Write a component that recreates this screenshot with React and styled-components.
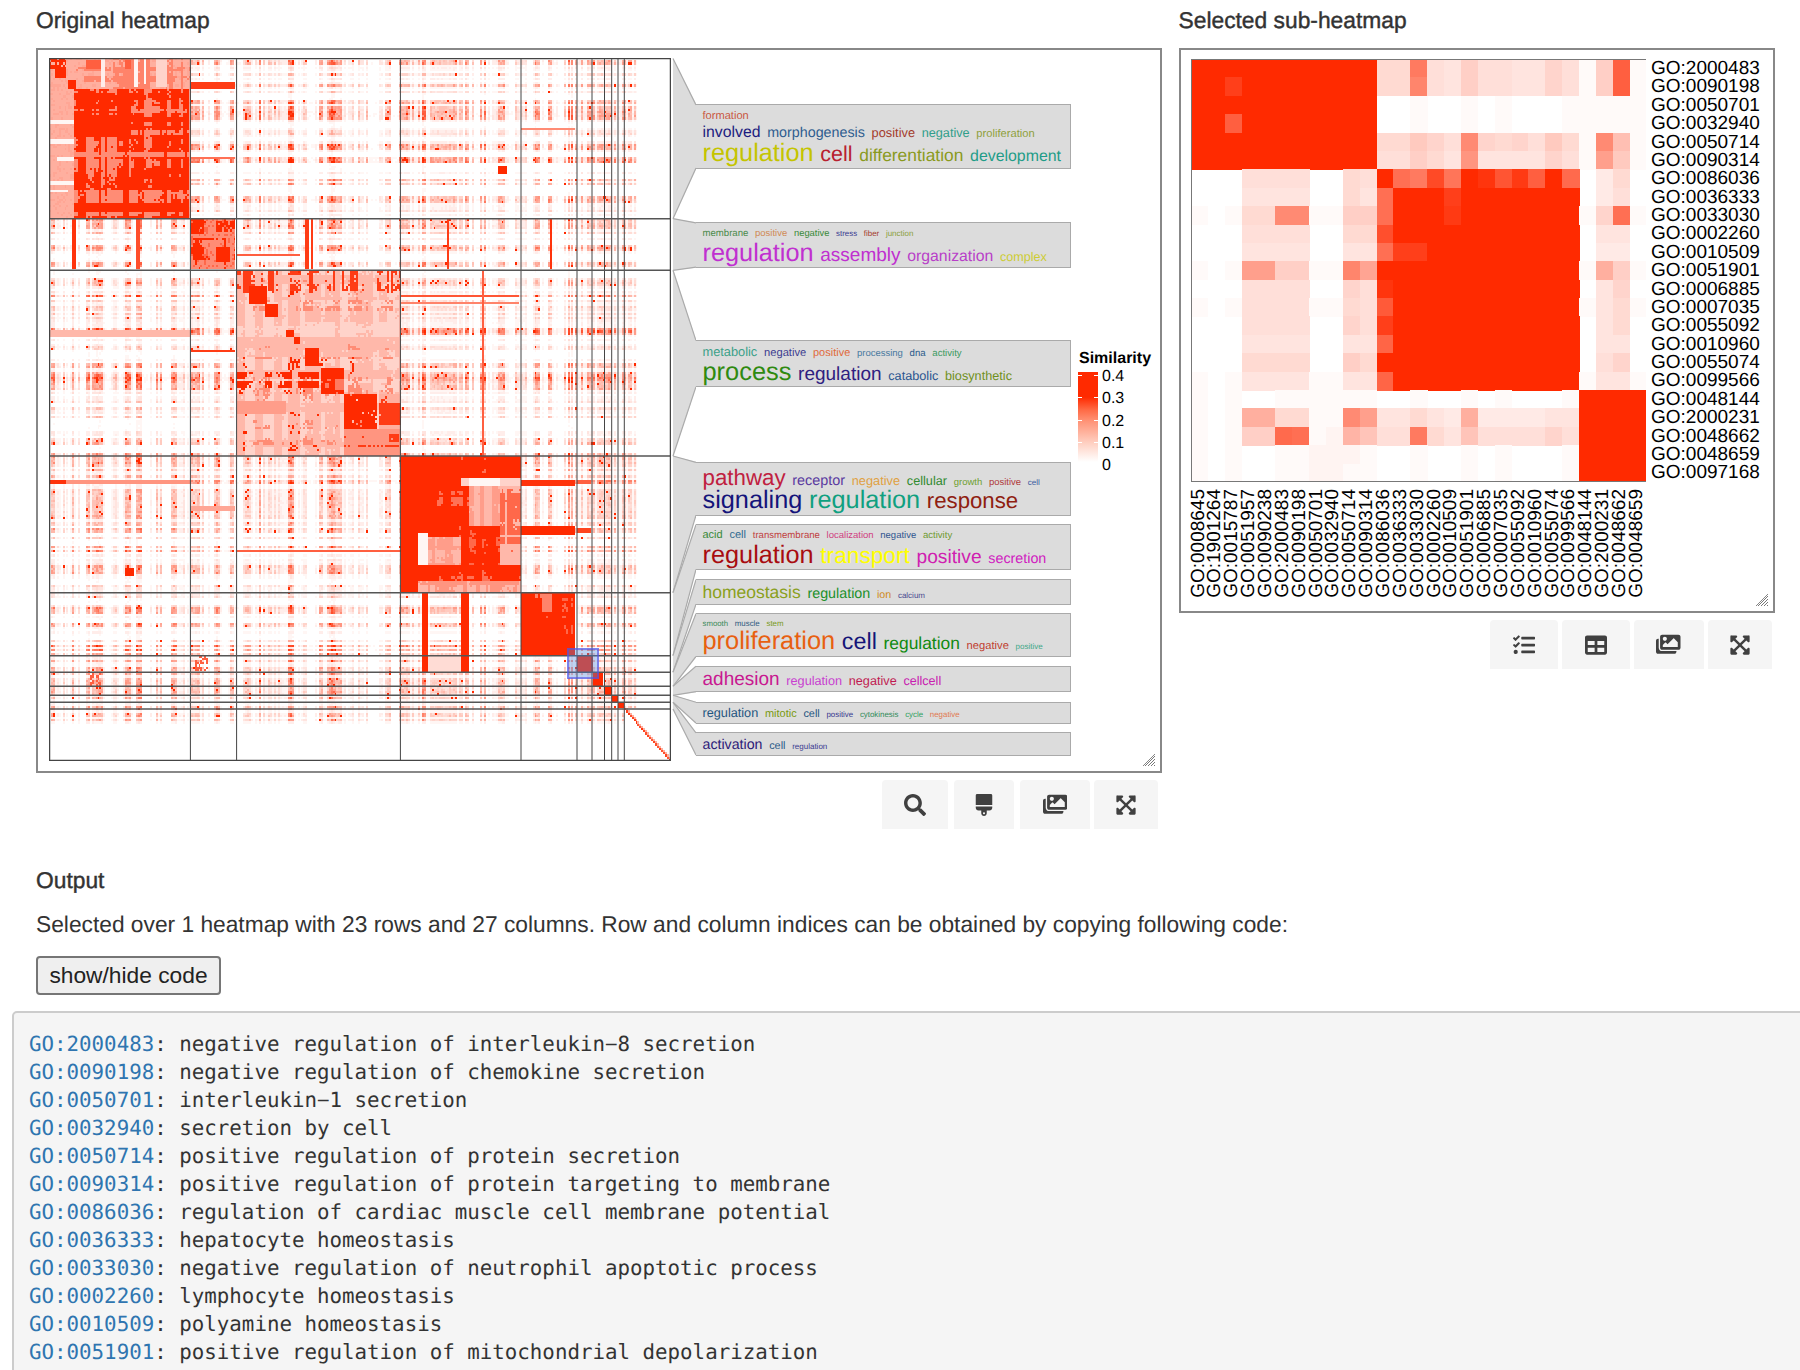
import React from "react";
import styled, { createGlobalStyle } from "styled-components";
import { FaSearch, FaBrush, FaImages, FaExpandArrowsAlt, FaTasks, FaTable } from "react-icons/fa";

const GlobalStyle = createGlobalStyle`
  html, body {
    margin: 0;
    padding: 0;
    height: 1370px;
    overflow: hidden;
    background: #fff;
    font-family: "Liberation Sans", Arial, sans-serif;
    color: #333;
    text-rendering: geometricPrecision;
  }
`;

const Page = styled.div`
  padding-left: 36px;
  width: 1800px;
  box-sizing: border-box;
`;

const TopRow = styled.div`
  display: flex;
  gap: 16.5px;
  align-items: flex-start;
`;

const Column = styled.section`
  width: ${(p) => p.$width}px;
`;

const Heading = styled.h4`
  margin: 0;
  height: 48px;
  font-size: 22.8px;
  line-height: 41px;
  font-weight: 400;
  -webkit-text-stroke: 0.4px #333;
  color: #333;
`;

const Panel = styled.div`
  position: relative;
  box-sizing: border-box;
  border: 2px solid #888;
  height: ${(p) => p.$height}px;
  padding: ${(p) => p.$pad};
  display: flex;
  align-items: flex-start;
`;

const ResizeGrip = styled.svg`
  position: absolute;
  right: 5px;
  bottom: 5px;
  width: 12px;
  height: 12px;
`;

const Toolbar = styled.div`
  display: flex;
  justify-content: flex-end;
  gap: ${(p) => p.$gap || 4}px;
  margin-top: 7px;
  padding-right: ${(p) => p.$right}px;
`;

const ToolButton = styled.button`
  width: ${(p) => p.$w}px;
  height: 49px;
  border: 0;
  padding: 0;
  margin-left: ${(p) => p.$ml || 0}px;
  background: #f5f5f5;
  border-radius: 4px 4px 0 0;
  color: #404040;
  font-size: ${(p) => p.$icon || 22}px;
  display: flex;
  align-items: center;
  justify-content: center;
`;

const HeatmapFrame = styled.div`
  position: relative;
  width: 622px;
  height: 703px;
  flex: none;
`;

const Selection = styled.div`
  position: absolute;
  left: 517.6px;
  top: 590.3px;
  width: 32.4px;
  height: 31px;
  box-sizing: border-box;
  border: 2px solid rgba(80, 80, 235, 0.6);
  background: rgba(70, 130, 220, 0.35);
`;

const LinkGutter = styled.svg`
  width: 25px;
  height: 703px;
  flex: none;
`;

const Annotations = styled.div`
  width: 375px;
  flex: none;
  display: flex;
  flex-direction: column;
`;

const CloudBox = styled.div`
  box-sizing: border-box;
  height: ${(p) => p.$height}px;
  margin-top: ${(p) => p.$top}px;
  background: #dcdcdc;
  border: 1.5px solid #aaa;
  border-left: 0;
  padding-left: 6.5px;
  overflow: hidden;
`;

const WordRow = styled.div`
  display: flex;
  align-items: baseline;
  gap: 6.7px;
  line-height: 1;
  white-space: nowrap;
  margin-top: ${(p) => p.$top}px;
`;

const Word = styled.span`
  font-size: ${(p) => p.$size}px;
  color: ${(p) => p.$color};
`;

const Legend = styled.div`
  margin-left: 7px;
  margin-top: 291px;
  width: 80px;
`;

const LegendTitle = styled.div`
  height: 17px;
  font-size: 16px;
  line-height: 20px;
  font-weight: 700;
  color: #000;
  padding-left: 1px;
`;

const LegendBody = styled.div`
  display: flex;
  gap: 4px;
`;

const LegendBar = styled.div`
  position: relative;
  width: 20px;
  height: 90px;
  margin-top: 6px;
  background: linear-gradient(#ff2a00 0%, #ff2a00 28%, #ff6a45 42%, #ff9478 55%, #ffd0c2 79%, #fff 100%);
`;

const LegendTick = styled.i`
  position: absolute;
  top: ${(p) => p.$top}px;
  height: 1px;
  width: 4px;
  background: #fff;
  ${(p) => p.$side}: 0;
`;

const LegendLabels = styled.div`
  font-size: 16px;
  line-height: 22.25px;
  color: #000;
`;

const SubPlot = styled.div`
  display: grid;
  grid-template-columns: 455.5px auto;
  column-gap: 5px;
`;

const RowLabels = styled.div`
  display: grid;
  grid-auto-rows: 18.39px;
  margin-top: 1px;
  font-size: 19px;
  line-height: 18.39px;
  color: #000;
`;

const ColLabels = styled.div`
  display: grid;
  grid-template-columns: repeat(27, 16.87px);
  margin-top: 6px;
  height: 108px;
`;

const ColLabel = styled.div`
  writing-mode: vertical-rl;
  transform: rotate(180deg);
  font-size: 19px;
  line-height: 16.87px;
  color: #000;
  white-space: nowrap;
`;

const OutputTitle = styled.h5`
  margin: 39px 0 0;
  font-size: 22.8px;
  line-height: 24px;
  font-weight: 400;
  -webkit-text-stroke: 0.4px #333;
  color: #333;
`;

const Paragraph = styled.p`
  margin: 20px 0 0;
  font-size: 22.75px;
  line-height: 24px;
  color: #333;
`;

const ToggleButton = styled.button`
  display: block;
  margin: 20px 0 0;
  width: 185px;
  height: 39px;
  box-sizing: border-box;
  border: 2px solid #767676;
  border-radius: 4px;
  background: #efefef;
  font-family: "Liberation Sans", Arial, sans-serif;
  font-size: 22.75px;
  color: #222;
  padding: 0;
`;

const CodeBlock = styled.pre`
  margin: 16px 0 0 -24px;
  width: 1800px;
  height: 400px;
  box-sizing: border-box;
  padding: 17px 15px;
  background: #f5f5f5;
  border: 2px solid #ccc;
  border-radius: 5px;
  font-family: "DejaVu Sans Mono", monospace;
  font-size: 20.8px;
  line-height: 28px;
  color: #333;
`;

const GoId = styled.span`
  color: #2f75b0;
`;

// ---- main heatmap, a fake but same looking similarity matrix ----
const N = 320;
const CX = 1477 / N; // reading coordinates -> matrix index
const CY = 2108 / N;

function mulberry(seed) {
  return () => {
    seed |= 0;
    seed = (seed + 0x6d2b79f5) | 0;
    let t = Math.imul(seed ^ (seed >>> 15), 1 | seed);
    t = (t + Math.imul(t ^ (t >>> 7), 61 | t)) ^ t;
    return ((t ^ (t >>> 14)) >>> 0) / 4294967296;
  };
}

const CLUSTERS = [0, 0.2277, 0.302, 0.566, 0.76, 0.85, 0.874, 0.8945, 0.906, 0.916, 0.926, 1].map((f) => Math.round(f * N));

function buildMatrix() {
  const r = mulberry(77);
  const last = CLUSTERS[10];
  const cluster = (i) => CLUSTERS.findIndex((c, k) => i >= c && i < CLUSTERS[k + 1]);
  const p = new Array(N).fill(0).map((_, i) => {
    if (i >= N * 0.95) return 0;
    if (i >= last) return 0.2 * r();
    const u = r();
    return u < 0.55 ? 0.02 : u < 0.85 ? 0.08 + 0.08 * r() : 0.22 + 0.13 * r();
  });
  const bands = [
    [50, 60, 0.6], [100, 108, 0.7], [135, 170, 0.55], [228, 238, 0.7], [255, 265, 0.75], [300, 310, 0.45],
    [340, 350, 0.55], [385, 410, 0.45], [440, 455, 0.55], [470, 480, 0.5], [515, 525, 0.45], [540, 548, 0.7],
    [560, 590, 0.32], [615, 628, 0.85], [690, 745, 0.5], [712, 720, 0.8], [845, 855, 0.4], [880, 925, 0.45],
    [928, 936, 0.8], [945, 1025, 0.36], [1035, 1040, 0.5], [1073, 1079, 0.6], [1115, 1135, 0.5], [1203, 1209, 0.6],
    [1233, 1241, 0.6], [1280, 1290, 0.75], [1300, 1335, 0.42], [1340, 1440, 0.42],
  ];
  bands.forEach(([a, b, v]) => {
    for (let i = Math.floor((a - 45) / CX); i <= (b - 45) / CX; i++) {
      p[i] = r() < 0.3 ? 0.08 : v * (0.8 + 0.4 * r());
    }
  });

  const m = [];
  for (let y = 0; y < N; y++) m.push(new Float32Array(N));
  for (let y = 0; y < N; y++) {
    for (let x = 0; x < y; x++) {
      let v = 0;
      if (cluster(x) !== cluster(y)) {
        v = 0.62 * p[x] * p[y] * (0.6 + 0.6 * r());
        if (r() < 0.06 && p[x] * p[y] > 0.12) v = 0.4;
      }
      m[y][x] = v;
      m[x][y] = v;
    }
  }

  const span = (x0, y0, x1, y1) => [
    Math.max(0, Math.round((x0 - 45) / CX)),
    Math.max(0, Math.round((y0 - 55) / CY)),
    Math.min(N, Math.round((x1 - 45) / CX)),
    Math.min(N, Math.round((y1 - 55) / CY)),
  ];

  const fill = (x0, y0, x1, y1, v, density = 1, alt = null) => {
    const [ax, ay, bx, by] = span(x0, y0, x1, y1);
    for (let y = ay; y < by; y++) {
      for (let x = ax; x < bx; x++) {
        if (r() < density) m[y][x] = v;
        else if (alt !== null) m[y][x] = alt;
      }
    }
  };

  // rows and columns that go on and off together, so the noise looks like a plaid
  const runs = (len) => {
    const out = [];
    while (out.length < len) {
      const a = r();
      const run = 1 + Math.floor(r() * 4);
      for (let i = 0; i < run; i++) out.push(a);
    }
    return out;
  };
  const plaid = (x0, y0, x1, y1, hi, lo, t) => {
    const [ax, ay, bx, by] = span(x0, y0, x1, y1);
    const cols = runs(bx - ax);
    const rows = runs(by - ay);
    for (let y = ay; y < by; y++) {
      for (let x = ax; x < bx; x++) {
        if (cols[x - ax] + rows[y - ay] + 0.35 * r() > t) m[y][x] = hi;
        else if (lo !== null) m[y][x] = lo;
      }
    }
  };

  // first cluster
  fill(45, 55, 380, 535, 0.15, 0.8, 0.17);
  plaid(105, 145, 378, 535, 0.4, 0.22, 1.1);
  plaid(105, 150, 240, 290, 0.4, null, 0.8);
  plaid(105, 58, 380, 145, 0.24, null, 1.2);
  fill(170, 58, 178, 140, 0.03);
  fill(246, 58, 256, 140, 0.02);
  fill(270, 58, 276, 135, 0.02);
  fill(300, 58, 326, 140, 0.08);
  fill(135, 60, 170, 90, 0.3);
  fill(225, 60, 238, 90, 0.3);
  fill(47, 58, 85, 90, 0.4, 0.7);
  fill(60, 90, 85, 115, 0.4);
  fill(92, 120, 110, 150, 0.4);
  fill(47, 240, 105, 250, 0.01);
  fill(47, 300, 105, 315, 0.01);
  fill(65, 352, 105, 362, 0.01);
  fill(47, 425, 105, 440, 0.01);
  fill(47, 450, 90, 458, 0.02);
  fill(272, 388, 300, 420, 0.4);
  fill(335, 478, 360, 510, 0.4);
  fill(248, 355, 275, 385, 0.4);
  fill(335, 360, 360, 385, 0.4);
  // second cluster
  fill(380, 536, 490, 690, 0.22, 0.8, 0.28);
  plaid(380, 536, 490, 690, 0.4, null, 1.3);
  fill(380, 536, 415, 580, 0.4, 0.9);
  fill(440, 620, 475, 665, 0.4);
  fill(440, 540, 490, 575, 0.4, 0.7);
  fill(380, 620, 412, 642, 0.4);
  // third cluster
  plaid(491, 692, 880, 1247, 0.14, 0.09, 1.1);
  plaid(491, 692, 880, 1247, 0.22, null, 1.8);
  plaid(491, 692, 880, 1247, 0.4, null, 2.0);
  plaid(491, 692, 880, 760, 0.36, null, 1.6);
  plaid(491, 1000, 745, 1060, 0.4, null, 1.55);
  fill(520, 740, 560, 795, 0.4);
  fill(558, 795, 590, 830, 0.4);
  fill(610, 870, 625, 890, 0.4);
  fill(625, 890, 640, 910, 0.4);
  fill(655, 925, 685, 975, 0.4);
  plaid(690, 985, 745, 1060, 0.4, 0.25, 1.0);
  fill(745, 1060, 825, 1170, 0.4, 0.95);
  plaid(830, 1060, 880, 1200, 0.36, 0.15, 1.3);
  plaid(745, 1170, 880, 1247, 0.36, 0.2, 1.3);
  fill(491, 1080, 610, 1120, 0.18);
  // fourth cluster
  plaid(880, 1250, 1165, 1655, 0.4, 0.26, 0.75);
  fill(1025, 1310, 1165, 1340, 0.08);
  fill(1040, 1310, 1115, 1340, 0.01);
  plaid(1040, 1340, 1115, 1455, 0.18, 0.13, 1.1);
  plaid(1115, 1340, 1165, 1580, 0.28, 0.14, 1.2);
  plaid(1023, 1455, 1115, 1580, 0.4, 0.28, 0.9);
  fill(920, 1480, 945, 1580, 0.01);
  plaid(945, 1490, 1023, 1580, 0.18, 0.13, 1.1);
  fill(880, 1480, 920, 1580, 0.4);
  fill(880, 1250, 920, 1300, 0.4);
  plaid(920, 1620, 1165, 1655, 0.2, 0.13, 1.1);
  // fifth cluster
  plaid(1167, 1658, 1298, 1847, 0.4, 0.28, 0.6);
  plaid(1200, 1665, 1240, 1715, 0.24, null, 0.9);
  // small ones on the diagonal
  fill(1300, 1847, 1336, 1897, 0.38);
  fill(1336, 1897, 1362, 1939, 0.4);
  fill(1365, 1939, 1382, 1966, 0.4);
  fill(1382, 1966, 1397, 1987, 0.4);
  fill(1397, 1987, 1412, 2007, 0.4);
  // stripes
  fill(1167, 1320, 1298, 1342, 0.38);
  fill(1300, 1320, 1335, 1330, 0.3);
  fill(1167, 1455, 1298, 1482, 0.4);
  fill(1300, 1468, 1335, 1480, 0.35);
  fill(47, 1322, 380, 1330, 0.2);
  fill(47, 1320, 85, 1330, 0.38);
  fill(491, 1528, 880, 1536, 0.3);
  fill(380, 1402, 490, 1412, 0.16);
  fill(930, 1658, 945, 1897, 0.4);
  fill(1025, 1658, 1040, 1897, 0.4);
  fill(945, 1847, 1025, 1897, 0.07);
  fill(1112, 375, 1135, 405, 0.4);
  fill(990, 536, 995, 690, 0.36);
  fill(655, 536, 662, 690, 0.36);
  fill(668, 536, 674, 690, 0.36);
  fill(100, 536, 108, 690, 0.38);
  fill(255, 536, 262, 690, 0.33);
  fill(1235, 536, 1242, 690, 0.38);
  fill(491, 642, 640, 650, 0.3);
  fill(380, 130, 490, 148, 0.36);
  fill(380, 350, 490, 358, 0.26);
  fill(380, 928, 490, 938, 0.36);
  fill(47, 872, 380, 890, 0.14);
  fill(880, 765, 1160, 772, 0.32);
  fill(880, 785, 1160, 792, 0.24);
  fill(1075, 692, 1079, 1250, 0.3);
  fill(1167, 85, 1300, 90, 0.32);
  fill(1167, 268, 1298, 274, 0.22);
  fill(225, 1585, 248, 1612, 0.4);
  fill(140, 1900, 170, 1938, 0.3, 0.5);
  fill(390, 1850, 425, 1895, 0.3, 0.5);
  for (let i = last; i < N; i++) {
    m[i][i] = 0.3 + 0.1 * r();
    if (i + 1 < N) m[i][i + 1] = 0.15;
  }
  return m;
}

const LEVELS = 24;

function levelColor(l) {
  const t = l / LEVELS;
  return `rgb(255,${Math.round(255 - 213 * t)},${Math.round(255 - 255 * t)})`;
}

function buildPaths() {
  const m = buildMatrix();
  const paths = new Array(LEVELS + 1).fill("");
  const levelAt = (y, x) => Math.min(LEVELS, Math.round((m[y][x] / 0.4) * LEVELS));
  for (let y = 0; y < N; y++) {
    let x = 0;
    while (x < N) {
      const l = levelAt(y, x);
      let e = x + 1;
      while (e < N && levelAt(y, e) === l) e++;
      if (l > 0) paths[l] += `M${x} ${y}h${e - x}v1h${x - e}z`;
      x = e;
    }
  }
  return paths;
}

const HEAT_PATHS = buildPaths();

const COL_BREAKS = [190.4, 236.6, 400.4, 521, 577, 592, 604.5, 611.7, 618, 624.3];
const ROW_BREAKS = [218.7, 270.3, 456, 592.7, 655.7, 672.3, 686.3, 695.3, 702.3, 709];

function MainHeatmap() {
  return (
    <svg width="622" height="703" style={{ display: "block" }}>
      <g transform={`scale(${621.5 / N} ${703 / N})`} shapeRendering="crispEdges">
        {HEAT_PATHS.map((d, l) => (d ? <path key={l} d={d} fill={levelColor(l)} /> : null))}
      </g>
      {COL_BREAKS.map((x) => (
        <line key={x} x1={x - 49} x2={x - 49} y1="0" y2="703" stroke="#444" strokeWidth="1" />
      ))}
      {ROW_BREAKS.map((y) => (
        <line key={y} y1={y - 58} y2={y - 58} x1="0" x2="621" stroke="#555" strokeWidth="1.5" />
      ))}
      <rect x="0.5" y="0.5" width="621" height="702" fill="none" stroke="#444" strokeWidth="1.5" />
    </svg>
  );
}

// top, bottom of each word cloud box, and where it starts on the heatmap side
const CLOUDS = [
  {
    top: 104.3, bottom: 168.7, from: [58.5, 218.7],
    rows: [
      { base: 121, words: [["formation", 11.1, "#c9573f"]] },
      { base: 139, words: [["involved", 15.8, "#1c1c80"], ["morphogenesis", 14.3, "#2f5d8f"], ["positive", 12.8, "#a33a2a"], ["negative", 12.7, "#2f9e8a"], ["proliferation", 11.2, "#8fa03c"]] },
      { base: 162.5, words: [["regulation", 25.3, "#c4c400"], ["cell", 21.5, "#b8202f"], ["differentiation", 17.4, "#8a9a1e"], ["development", 15.9, "#1f9c88"]] },
    ],
  },
  {
    top: 222.3, bottom: 267.7, from: [218.7, 270.3],
    rows: [
      { base: 237, words: [["membrane", 9.6, "#4a8a4a"], ["positive", 9.5, "#d08a55"], ["negative", 9.4, "#3a8a3a"], ["stress", 7.9, "#3a3a90"], ["fiber", 7.9, "#a33a2a"], ["junction", 8, "#8aa040"]] },
      { base: 261.5, words: [["regulation", 25.3, "#c030d0"], ["assembly", 19, "#c030d0"], ["organization", 15.8, "#b840c8"], ["complex", 12.6, "#cccc33"]] },
    ],
  },
  {
    top: 340, bottom: 387.3, from: [270.3, 456],
    rows: [
      { base: 357, words: [["metabolic", 12.8, "#3aa088"], ["negative", 11.2, "#3c3c90"], ["positive", 11, "#e0693a"], ["processing", 9.5, "#4a7aa0"], ["dna", 9.6, "#2a5a8a"], ["activity", 9.6, "#3a9a60"]] },
      { base: 381.5, words: [["process", 25.4, "#2f8a10"], ["regulation", 19, "#2e2080"], ["catabolic", 12.7, "#2a5590"], ["biosynthetic", 12.7, "#6f9020"]] },
    ],
  },
  {
    top: 461.7, bottom: 515.7, from: [456, 592.7],
    rows: [
      { base: 486, words: [["pathway", 22.3, "#c02040"], ["receptor", 14.4, "#5a3aa0"], ["negative", 12.8, "#e0a040"], ["cellular", 12.7, "#2f8a2f"], ["growth", 9.5, "#6fa030"], ["positive", 9.5, "#b03a3a"], ["cell", 8, "#3a5aa0"]] },
      { base: 510, words: [["signaling", 25.3, "#14147a"], ["regulation", 25.3, "#10a080"], ["response", 22.2, "#8f2010"]] },
    ],
  },
  {
    top: 524, bottom: 570, from: [592.7, 655.7],
    rows: [
      { base: 540, words: [["acid", 11, "#3a8a3a"], ["cell", 11.1, "#2f6a90"], ["transmembrane", 9.6, "#c04040"], ["localization", 9.5, "#d04080"], ["negative", 9.5, "#2f5590"], ["activity", 9.6, "#6f9a30"]] },
      { base: 564.8, words: [["regulation", 25.3, "#a80c10"], ["transport", 22.7, "#ffff00"], ["positive", 19.2, "#d020b0"], ["secretion", 14.3, "#d020c0"]] },
    ],
  },
  {
    top: 579, bottom: 604.7, from: [655.7, 672.3],
    rows: [{ base: 599.5, words: [["homeostasis", 17.5, "#8aa020"], ["regulation", 14.3, "#20902a"], ["ion", 10.7, "#d08a20"], ["calcium", 8, "#4a4a90"]] }],
  },
  {
    top: 613, bottom: 657, from: [672.3, 686.3],
    rows: [
      { base: 627, words: [["smooth", 7.8, "#3a8a5a"], ["muscle", 7.9, "#2f5a80"], ["stem", 7.9, "#7a9a20"]] },
      { base: 651.5, words: [["proliferation", 25.4, "#e86010"], ["cell", 23.3, "#141478"], ["regulation", 17.4, "#108a10"], ["negative", 11.2, "#c04030"], ["positive", 8, "#40a888"]] },
    ],
  },
  {
    top: 665.7, bottom: 692.3, from: [686.3, 695.3],
    rows: [{ base: 686.8, words: [["adhesion", 19, "#c81890"], ["regulation", 12.7, "#c840d0"], ["negative", 12.7, "#c01a50"], ["cellcell", 12.6, "#c820b0"]] }],
  },
  {
    top: 701.7, bottom: 723.7, from: [695.3, 702.3],
    rows: [{ base: 718, words: [["regulation", 12.7, "#1f5580"], ["mitotic", 11, "#7a9a10"], ["cell", 10.9, "#1f5580"], ["positive", 7.9, "#3a3a90"], ["cytokinesis", 7.9, "#2f8a5a"], ["cycle", 7.9, "#30a060"], ["negative", 7.9, "#e07a50"]] }],
  },
  {
    top: 732.3, bottom: 755.7, from: [702.3, 709],
    rows: [{ base: 750.8, words: [["activation", 14.2, "#2c1a78"], ["cell", 10.9, "#2a5a88"], ["regulation", 8, "#3a3a90"]] }],
  },
];

function CloudLinks() {
  return (
    <LinkGutter viewBox="0 0 25 703">
      {CLOUDS.map((c) => {
        const [a, b] = c.from;
        const points = `2,${a - 58} 25,${c.top - 58} 25,${c.bottom - 58} 2,${b - 58}`;
        return (
          <g key={c.top}>
            <polygon points={points} fill="#dcdcdc" />
            <polyline points={`2,${a - 58} 25,${c.top - 57.4}`} fill="none" stroke="#aaa" strokeWidth="1.2" />
            <polyline points={`2,${b - 58} 25,${c.bottom - 58.6}`} fill="none" stroke="#aaa" strokeWidth="1.2" />
          </g>
        );
      })}
    </LinkGutter>
  );
}

function Cloud({ cloud, prevBottom }) {
  let cursor = cloud.top + 1.5;
  return (
    <CloudBox $top={cloud.top - prevBottom} $height={cloud.bottom - cloud.top}>
      {cloud.rows.map((row) => {
        const size = Math.max(...row.words.map((w) => w[1]));
        const rowTop = row.base - 0.8465 * size;
        const margin = rowTop - cursor;
        cursor = rowTop + size;
        return (
          <WordRow key={row.base} $top={margin}>
            {row.words.map(([text, wordSize, color]) => (
              <Word key={text} $size={wordSize} $color={color}>
                {text}
              </Word>
            ))}
          </WordRow>
        );
      })}
    </CloudBox>
  );
}

const ROW_IDS = ["2000483", "0090198", "0050701", "0032940", "0050714", "0090314", "0086036", "0036333", "0033030", "0002260", "0010509", "0051901", "0006885", "0007035", "0055092", "0010960", "0055074", "0099566", "0048144", "2000231", "0048662", "0048659", "0097168"];
const COL_IDS = ["0008645", "1901264", "0015787", "0051957", "0090238", "2000483", "0090198", "0050701", "0032940", "0050714", "0090314", "0086036", "0036333", "0033030", "0002260", "0010509", "0051901", "0006885", "0007035", "0055092", "0010960", "0055074", "0099566", "0048144", "2000231", "0048662", "0048659"];

const F = 40;
const SUB = [
  [F, F, F, F, F, F, F, F, F, F, F, 7, 7, 25, 6, 5, 9, 6, 6, 5, 5, 8, 6, 1, 9, 30, 1],
  [F, F, 36, F, F, F, F, F, F, F, F, 7, 7, 23, 6, 5, 9, 6, 6, 5, 5, 8, 6, 1, 9, 30, 1],
  [F, F, F, F, F, F, F, F, F, F, F, 0, 0, 1, 0, 0, 1, 0, 1, 0, 0, 0, 1, 1, 1, 1, 1],
  [F, F, 30, F, F, F, F, F, F, F, F, 0, 0, 1, 0, 0, 1, 0, 1, 0, 0, 0, 1, 1, 1, 1, 1],
  [F, F, F, F, F, F, F, F, F, F, F, 7, 7, 10, 8, 6, 22, 8, 7, 8, 6, 10, 7, 1, 22, 12, 1],
  [F, F, F, F, F, F, F, F, F, F, F, 6, 6, 9, 7, 5, 20, 5, 5, 5, 5, 8, 6, 1, 18, 10, 1],
  [0, 0, 0, 6, 6, 6, 6, 0, 0, 7, 6, F, 27, 25, 34, 26, F, 38, 32, 37, 30, F, 28, 0, 4, 7, 0],
  [0, 0, 0, 5, 5, 5, 5, 0, 0, 7, 5, 27, F, F, F, 36, F, F, F, F, F, F, F, 0, 4, 6, 0],
  [1, 0, 1, 7, 7, 22, 22, 1, 1, 9, 9, 27, F, F, F, 37, F, F, F, F, F, F, F, 1, 8, 27, 1],
  [0, 0, 0, 6, 6, 6, 6, 0, 0, 7, 7, 33, F, F, F, F, F, F, F, F, F, F, F, 0, 5, 5, 0],
  [0, 0, 0, 5, 5, 5, 5, 0, 0, 5, 5, 27, 36, 36, F, F, F, F, F, F, F, F, F, 0, 4, 4, 0],
  [1, 0, 1, 18, 18, 9, 9, 1, 1, 23, 17, F, F, F, F, F, F, F, F, F, F, F, F, 1, 15, 9, 1],
  [0, 0, 0, 6, 6, 6, 6, 0, 0, 8, 6, 38, F, F, F, F, F, F, F, F, F, F, F, 0, 5, 8, 0],
  [1, 0, 1, 6, 6, 6, 6, 1, 1, 7, 6, 31, F, F, F, F, F, F, F, F, F, F, F, 1, 5, 7, 1],
  [0, 0, 0, 6, 6, 6, 6, 0, 0, 8, 6, 36, F, F, F, F, F, F, F, F, F, F, F, 0, 5, 7, 0],
  [0, 0, 0, 5, 5, 5, 5, 0, 0, 5, 5, 29, F, F, F, F, F, F, F, F, F, F, F, 0, 5, 5, 0],
  [0, 0, 0, 7, 7, 7, 7, 0, 0, 9, 7, F, F, F, F, F, F, F, F, F, F, F, F, 0, 6, 8, 0],
  [1, 0, 1, 5, 5, 5, 5, 1, 1, 5, 5, 29, F, F, F, F, F, F, F, F, F, F, F, 1, 5, 5, 1],
  [1, 0, 1, 0, 0, 1, 1, 1, 1, 1, 1, 0, 0, 1, 0, 0, 1, 0, 1, 0, 0, 0, 1, F, F, F, F],
  [1, 0, 1, 15, 15, 7, 7, 1, 1, 22, 18, 5, 5, 7, 5, 4, 15, 4, 4, 4, 4, 5, 5, F, F, F, F],
  [1, 0, 1, 9, 9, 28, 27, 1, 2, 14, 11, 6, 6, 25, 7, 5, 11, 6, 6, 6, 6, 8, 6, F, F, F, F],
  [1, 0, 1, 0, 0, 1, 1, 2, 2, 2, 1, 0, 0, 1, 0, 0, 1, 0, 1, 0, 0, 0, 1, F, F, F, F],
  [1, 0, 1, 0, 0, 1, 1, 2, 2, 1, 1, 0, 0, 1, 0, 0, 1, 0, 1, 0, 0, 0, 1, F, F, F, F],
];

function subColor(v) {
  const t = v / 40;
  return `rgb(255,${Math.round(255 - 213 * t)},${Math.round(255 - 255 * t)})`;
}

function SubHeatmap() {
  const w = 455.5 / 27;
  const h = 423 / 23;
  return (
    <svg width="455.5" height="423" style={{ display: "block" }} shapeRendering="crispEdges">
      {SUB.map((row, y) =>
        row.map((v, x) => (v > 0 ? <rect key={`${x}-${y}`} x={x * w} y={y * h} width={w + 0.5} height={h + 0.5} fill={subColor(v)} /> : null))
      )}
      <rect x="0.5" y="0.5" width="454.5" height="422" fill="none" stroke="#777" />
    </svg>
  );
}

const CODE = [
  ["2000483", "negative regulation of interleukin\u22128 secretion"],
  ["0090198", "negative regulation of chemokine secretion"],
  ["0050701", "interleukin\u22121 secretion"],
  ["0032940", "secretion by cell"],
  ["0050714", "positive regulation of protein secretion"],
  ["0090314", "positive regulation of protein targeting to membrane"],
  ["0086036", "regulation of cardiac muscle cell membrane potential"],
  ["0036333", "hepatocyte homeostasis"],
  ["0033030", "negative regulation of neutrophil apoptotic process"],
  ["0002260", "lymphocyte homeostasis"],
  ["0010509", "polyamine homeostasis"],
  ["0051901", "positive regulation of mitochondrial depolarization"],
];

function Grip() {
  return (
    <ResizeGrip viewBox="0 0 12 12">
      {[2, 5, 8, 11].map((o) => (
        <line key={o} x1={o} y1="12" x2="12" y2={o} stroke="#777" strokeWidth="1" />
      ))}
      <line x1="0" y1="12" x2="12" y2="0" stroke="#888" strokeWidth="1" />
    </ResizeGrip>
  );
}

function App() {
  return (
    <Page>
      <GlobalStyle />
      <TopRow>
        <Column $width={1126}>
          <Heading>Original heatmap</Heading>
          <Panel $height={725} $pad="8px 0 0 11px">
            <HeatmapFrame>
              <MainHeatmap />
              <Selection />
            </HeatmapFrame>
            <CloudLinks />
            <Annotations>
              {CLOUDS.map((c, i) => (
                <Cloud key={c.top} cloud={c} prevBottom={i === 0 ? 58 : CLOUDS[i - 1].bottom} />
              ))}
            </Annotations>
            <Legend>
              <LegendTitle>Similarity</LegendTitle>
              <LegendBody>
                <LegendBar>
                  {[3, 25, 48, 70].map((t) => (
                    <React.Fragment key={t}>
                      <LegendTick $top={t} $side="left" />
                      <LegendTick $top={t} $side="right" />
                    </React.Fragment>
                  ))}
                </LegendBar>
                <LegendLabels>
                  <div>0.4</div>
                  <div>0.3</div>
                  <div>0.2</div>
                  <div>0.1</div>
                  <div>0</div>
                </LegendLabels>
              </LegendBody>
            </Legend>
            <Grip />
          </Panel>
          <Toolbar $right={4} $gap={6}>
            <ToolButton $w={66}><FaSearch /></ToolButton>
            <ToolButton $w={60}><FaBrush /></ToolButton>
            <ToolButton $w={70} $icon={24.5}><FaImages /></ToolButton>
            <ToolButton $w={64} $ml={-2}><FaExpandArrowsAlt /></ToolButton>
          </Toolbar>
        </Column>
        <Column $width={596}>
          <Heading>Selected sub-heatmap</Heading>
          <Panel $height={565} $pad="9px 0 0 10px">
            <SubPlot>
              <SubHeatmap />
              <RowLabels>
                {ROW_IDS.map((id) => (
                  <div key={id}>GO:{id}</div>
                ))}
              </RowLabels>
              <ColLabels>
                {COL_IDS.map((id) => (
                  <ColLabel key={id}>GO:{id}</ColLabel>
                ))}
              </ColLabels>
            </SubPlot>
            <Grip />
          </Panel>
          <Toolbar $right={3} $gap={4}>
            <ToolButton $w={68}><FaTasks /></ToolButton>
            <ToolButton $w={68}><FaTable /></ToolButton>
            <ToolButton $w={70} $icon={24.5}><FaImages /></ToolButton>
            <ToolButton $w={64}><FaExpandArrowsAlt /></ToolButton>
          </Toolbar>
        </Column>
      </TopRow>
      <OutputTitle>Output</OutputTitle>
      <Paragraph>Selected over 1 heatmap with 23 rows and 27 columns. Row and column indices can be obtained by copying following code:</Paragraph>
      <ToggleButton>show/hide code</ToggleButton>
      <CodeBlock>
        {CODE.map(([id, text]) => (
          <div key={id}>
            <GoId>GO:{id}</GoId>: {text}
          </div>
        ))}
      </CodeBlock>
    </Page>
  );
}

export default App;
